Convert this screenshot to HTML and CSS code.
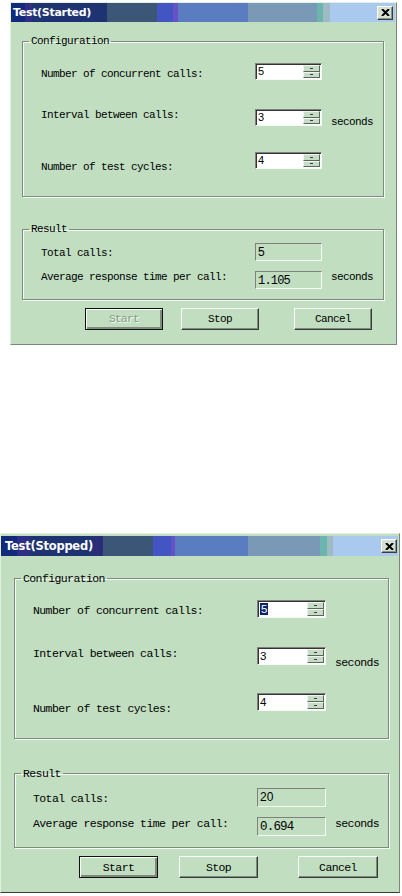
FILE: index.html
```html
<!DOCTYPE html>
<html lang="en">
<head>
    <meta charset="UTF-8">
    <meta name="viewport" content="width=device-width, initial-scale=1.0">
    <title>Test</title>
    <link rel="stylesheet" href="styles.css">
</head>
<body>

<!-- 运行中 -->
<div class="dlg dlg-started">
	<div class="titlebar">
		<span class="title">Test(Started)</span>
		<span class="close"><svg width="9" height="7" viewBox="0 0 9 7"><path d="M1 0L8 7M8 0L1 7" stroke="#000" stroke-width="2"/></svg></span>
	</div>
	<div class="dlg-body">
		<fieldset class="group group-config">
			<legend>Configuration</legend>
			<div class="row r1">
				<span class="lbl">Number of concurrent calls:</span>
				<span class="spin"><span class="spin-val">5</span><span class="spin-btns"><span></span><span></span></span></span>
			</div>
			<div class="row r2">
				<span class="lbl">Interval between calls:</span>
				<span class="spin"><span class="spin-val">3</span><span class="spin-btns"><span></span><span></span></span></span>
				<span class="unit">seconds</span>
			</div>
			<div class="row r3">
				<span class="lbl">Number of test cycles:</span>
				<span class="spin"><span class="spin-val">4</span><span class="spin-btns"><span></span><span></span></span></span>
			</div>
		</fieldset>
		<fieldset class="group group-result">
			<legend>Result</legend>
			<div class="row r1">
				<span class="lbl">Total calls:</span>
				<span class="out">5</span>
			</div>
			<div class="row r2">
				<span class="lbl">Average response time per call:</span>
				<span class="out out-dec">1.105</span>
				<span class="unit">seconds</span>
			</div>
		</fieldset>
		<div class="buttons">
			<button class="btn btn-default" disabled>Start</button>
			<button class="btn btn-stop">Stop</button>
			<button class="btn btn-cancel">Cancel</button>
		</div>
	</div>
</div>

<!-- 已停止 -->
<div class="dlg dlg-stopped">
	<div class="titlebar">
		<span class="title">Test(Stopped)</span>
		<span class="close"><svg width="9" height="7" viewBox="0 0 9 7"><path d="M1 0L8 7M8 0L1 7" stroke="#000" stroke-width="2"/></svg></span>
	</div>
	<div class="dlg-body">
		<fieldset class="group group-config">
			<legend>Configuration</legend>
			<div class="row r1">
				<span class="lbl">Number of concurrent calls:</span>
				<span class="spin"><span class="spin-val"><span class="sel">5</span></span><span class="spin-btns"><span></span><span></span></span></span>
			</div>
			<div class="row r2">
				<span class="lbl">Interval between calls:</span>
				<span class="spin"><span class="spin-val">3</span><span class="spin-btns"><span></span><span></span></span></span>
				<span class="unit">seconds</span>
			</div>
			<div class="row r3">
				<span class="lbl">Number of test cycles:</span>
				<span class="spin"><span class="spin-val">4</span><span class="spin-btns"><span></span><span></span></span></span>
			</div>
		</fieldset>
		<fieldset class="group group-result">
			<legend>Result</legend>
			<div class="row r1">
				<span class="lbl">Total calls:</span>
				<span class="out">20</span>
			</div>
			<div class="row r2">
				<span class="lbl">Average response time per call:</span>
				<span class="out out-dec">0.694</span>
				<span class="unit">seconds</span>
			</div>
		</fieldset>
		<div class="buttons">
			<button class="btn btn-default">Start</button>
			<button class="btn btn-stop">Stop</button>
			<button class="btn btn-cancel">Cancel</button>
		</div>
	</div>
</div>

</body>
</html>
```

FILE: styles.css
```css
*{
	padding:0;margin:0;box-sizing:border-box;
}
body{background:#fff;font-family:"Liberation Mono",monospace;font-size:11px;color:#000;}

/* 窗口 */
.dlg{
	background:#c1dec1;
	border:1px solid;
	border-color:#e2f0e2 #7a867a #7a867a #e2f0e2;
}
.dlg-started{width:387px;margin:2px 0 0 10px;}
.dlg-stopped{width:400px;margin:188px 0 0 0;font-size:11.5px;border-bottom-color:#3a3a3a;}

.titlebar{
	display:flex;
	align-items:center;
	justify-content:space-between;
	height:19px;
	margin-right:1px;
	padding:0 2px 0 2px;
}
.title{
	font-family:"DejaVu Sans",sans-serif;
	font-weight:bold;
	font-size:11px;
	letter-spacing:-0.3px;
	color:#fff;
}
.close{
	display:flex;
	align-items:center;
	justify-content:center;
	width:16px;height:14px;
	background:#d6e0d2;
	border:1px solid;
	border-color:#fff #3c3c3c #3c3c3c #fff;
	box-shadow:inset -1px -1px 0 #8a948a;
}
.dlg-started .titlebar{
	background:linear-gradient(to right,
		#122a7a 0,#122a7a 14px,#2e2e82 14px,#2e2e82 21px,#1e3472 21px,#1e3472 96px,
		#3b5677 96px,#3b5677 146px,#4255c2 146px,#4255c2 162px,#6652c4 162px,#6652c4 167px,
		#5a7cc0 167px,#5a7cc0 237px,#7a99b6 237px,#7a99b6 306px,#6cb4ae 306px,#6cb4ae 312px,
		#9ebac2 312px,#9ebac2 319px,#a9c9ef 319px);
}
.dlg-stopped .titlebar{
	height:20px;
	margin-top:2px;
	padding:0 1px 0 4px;
	background:linear-gradient(to right,
		#122a7a 0,#122a7a 16px,#2e2e86 16px,#2e2e86 29px,#1e3472 29px,#1e3472 92px,
		#2a2e78 92px,#2a2e78 102px,#3b5677 102px,#3b5677 152px,#4255c2 152px,#4255c2 170px,
		#6652c4 170px,#6652c4 174px,#5a7cc0 174px,#5a7cc0 247px,#7a99b6 247px,#7a99b6 319px,
		#6cb4ae 319px,#6cb4ae 326px,#9ebac2 326px,#9ebac2 332px,#a9c9ef 332px);
}
.dlg-stopped .title{font-size:11.5px;letter-spacing:-0.25px;}

.dlg-body{padding:0 12px 14px 11px;}
.dlg-stopped .dlg-body{padding:0 10px 14px 13px;}

/* 分组框 */
.group{
	border:1px solid #7f8a7f;
	box-shadow:1px 1px 0 #f4fbf4, inset 1px 1px 0 #f4fbf4;
	padding:16px 6px 27px 6px;
	min-width:0;
}
.group legend{
	padding:0 2px;
	line-height:12px;
	letter-spacing:-0.6px;
}
.dlg-stopped .group legend{line-height:13px;}
.group-config{margin-top:13px;}
.group-result{margin-top:26px;padding:8px 6px 10px 6px;}
.dlg-stopped .group-config{margin-top:16px;padding:15px 6px 27px 6px;}
.dlg-stopped .group-result{margin-top:28px;padding:8px 6px 11px 6px;}

.row{
	display:flex;
	align-items:flex-start;
	height:17px;
	padding-left:12px;
	letter-spacing:-0.6px;
}
.lbl{width:214px;line-height:12px;flex:none;}
.unit{margin-left:9px;line-height:12px;}

.group-config .r2{margin-top:29px;}
.group-config .r3{margin-top:26px;}
.group-config .r1 .lbl{margin-top:5px;}
.group-config .r2 .unit{margin-top:7px;}
.group-config .r3 .lbl{margin-top:9px;}
.group-result .row{height:18px;}
.group-result .r2{margin-top:10px;}
.group-result .r1 .lbl{margin-top:4px;}

.dlg-stopped .row{height:18px;}
.dlg-stopped .lbl{width:224px;line-height:13px;}
.dlg-stopped .unit{line-height:13px;}
.dlg-stopped .group-config .r3{margin-top:28px;}
.dlg-stopped .group-config .r1 .lbl{margin-top:4px;}
.dlg-stopped .group-config .r2 .unit{margin-top:9px;}
.dlg-stopped .group-result .row{height:19px;}

/* 微调框 */
.spin{
	display:flex;
	width:67px;height:100%;
	flex:none;
	background:#fff;
	border:1px solid;
	border-color:#808080 #f4fbf4 #f4fbf4 #808080;
	box-shadow:inset 1px 1px 0 #333;
	padding:1px 1px 1px 2px;
	letter-spacing:0;
}
.dlg-stopped .spin{width:69px;}
.spin-val{flex:1;font-family:"Liberation Sans",sans-serif;font-size:11px;line-height:13px;}
.dlg-stopped .spin-val{font-size:11.5px;line-height:14px;}
.sel{background:#0a246a;color:#fff;padding:0 1px;}
.spin-btns{display:flex;flex-direction:column;width:17px;}
.spin-btns span{
	flex:1;
	display:flex;
	align-items:center;
	justify-content:center;
	background:#c6dcc6;
	border:1px solid;
	border-color:#eef7ee #5c665c #5c665c #eef7ee;
}
.spin-btns span::after{content:"";width:3px;height:1px;background:#3a3a3a;}

.out{
	width:67px;height:100%;
	flex:none;
	border:1px solid;
	border-color:#808080 #f4fbf4 #f4fbf4 #808080;
	padding:0 2px;
	font-family:"Liberation Sans",sans-serif;
	font-size:12px;
	line-height:16px;
	letter-spacing:0;
}
.out-dec{font-family:"Liberation Mono",monospace;font-size:12px;letter-spacing:-0.8px;padding-top:1px;}
.dlg-stopped .out{width:69px;line-height:17px;}
.dlg-stopped .out-dec{font-size:12.5px;}

/* 按钮 */
.buttons{display:flex;margin-top:8px;padding-left:63px;}
.dlg-stopped .buttons{padding-left:65px;}
.btn{
	width:78px;height:22px;
	background:#c1dec1;
	border:1px solid;
	border-color:#fafffa #3a3a3a #3a3a3a #fafffa;
	box-shadow:inset -1px -1px 0 #7f8a7f;
	font-family:inherit;
	font-size:inherit;
	letter-spacing:-0.6px;
	color:#000;
}
.btn-default{
	border-color:#111;
	box-shadow:inset 1px 1px 0 #fafffa, inset -2px -2px 0 #7f8a7f;
}
.btn:disabled{color:#8c978c;text-shadow:1px 1px 0 #f4fbf4;}
.btn-stop{margin-left:18px;}
.btn-cancel{margin-left:35px;}
.dlg-stopped .btn{width:79px;}
.dlg-stopped .btn-stop{margin-left:21px;}
.dlg-stopped .btn-cancel{margin-left:40px;width:80px;}
```
